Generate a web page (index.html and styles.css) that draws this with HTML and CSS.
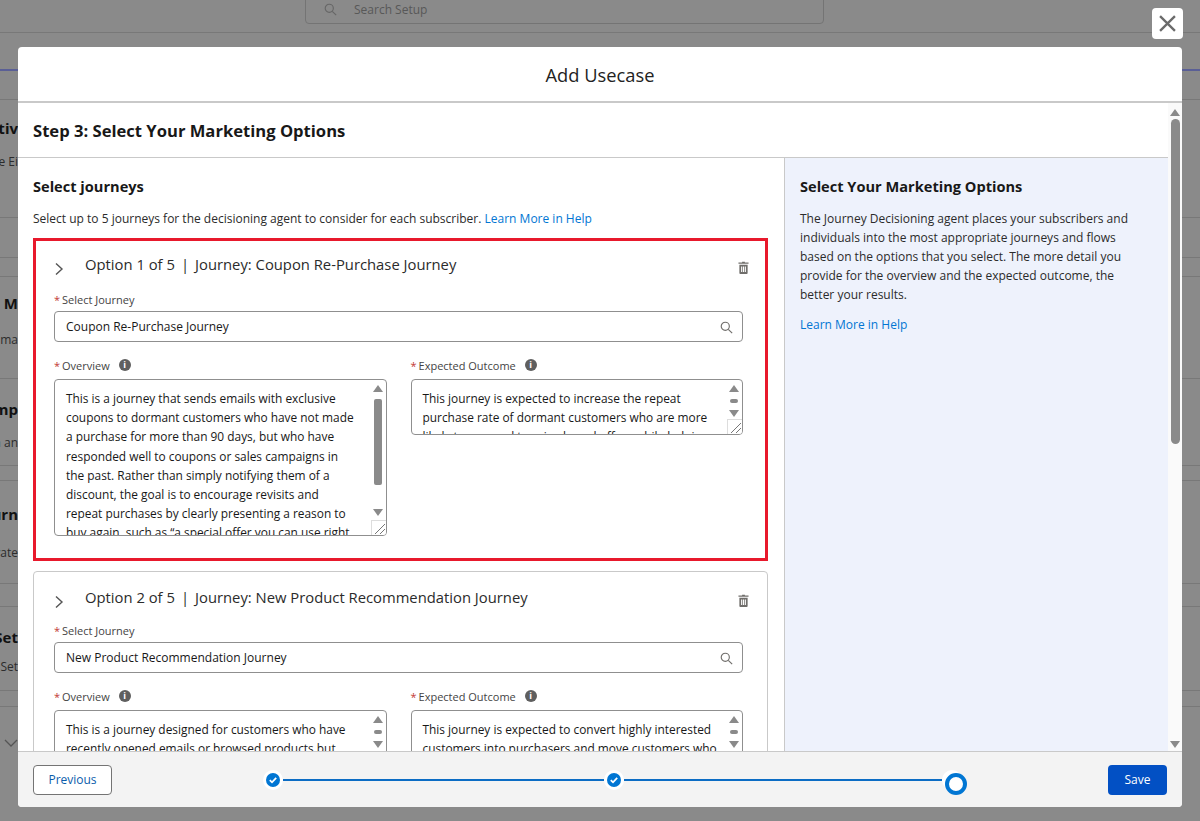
FILE: index.html
```html
<!DOCTYPE html>
<html lang="en">
<head>
    <meta charset="UTF-8">
    <title>Add Usecase</title>
    <link rel="stylesheet" href="styles.css">
</head>
<body>
    <!-- Setup page behind the dialog -->
    <div class="setup-page">
        <div class="setup-top">
            <div class="setup-search">
                <svg class="icon-search" viewBox="0 0 16 16"><circle cx="6.5" cy="6.5" r="5"/><path d="M10.2 10.2 15 15"/></svg>
                <span>Search Setup</span>
            </div>
        </div>
        <div class="setup-tabs"></div>
        <div class="setup-rows">
            <div class="setup-row row-1"><b>Objectiv</b><span>The Ei</span></div>
            <div class="setup-gap gap-1"></div>
            <div class="setup-gap gap-2"></div>
            <div class="setup-row row-2"><b>Email M</b><span>Auto ma</span></div>
            <div class="setup-row row-3"><b>Comp</b><span>Plan an</span></div>
            <div class="setup-gap gap-3"></div>
            <div class="setup-row row-4"><b>Journ</b><span>Activate</span></div>
            <div class="setup-gap gap-4"></div>
            <div class="setup-row row-5"><b>Set</b><span>Set</span></div>
            <div class="setup-gap gap-5"></div>
            <svg class="setup-chevron" viewBox="0 0 14 8"><path d="M1 1 7 7 13 1"/></svg>
        </div>
    </div>

    <button class="close-btn">
        <svg viewBox="0 0 16 16"><path d="M1 1 15 15M15 1 1 15"/></svg>
    </button>

    <div class="modal">
        <div class="modal-header">Add Usecase</div>

        <div class="modal-body">
            <div class="modal-scroll">
                <h2 class="step-title">Step 3: Select Your Marketing Options</h2>
                <div class="columns">
                    <div class="main-col">
                        <h3>Select journeys</h3>
                        <p class="intro">Select up to 5 journeys for the decisioning agent to consider for each subscriber. <a href="#">Learn More in Help</a></p>

                        <div class="card card-selected">
                            <div class="card-head">
                                <svg class="chevron" viewBox="0 0 10 14"><path d="M2 1.5 8 7 2 12.5"/></svg>
                                <span class="card-title">Option 1 of 5<span class="sep">|</span>Journey: Coupon Re-Purchase Journey</span>
                                <svg class="trash" viewBox="0 0 12 14"><path d="M4.5 1.5V.6h3v.9H11.5V3H.5V1.5Z"/><path fill-rule="evenodd" d="M1.5 4h9v9a1 1 0 0 1-1 1h-7a1 1 0 0 1-1-1ZM3.4 6v6h1.2V6ZM5.4 6v6h1.2V6ZM7.4 6v6h1.2V6Z"/></svg>
                            </div>
                            <label class="field-label"><i>*</i>Select Journey</label>
                            <div class="lookup">
                                <span>Coupon Re-Purchase Journey</span>
                                <svg class="icon-search" viewBox="0 0 16 16"><circle cx="6.5" cy="6.5" r="5"/><path d="M10.2 10.2 15 15"/></svg>
                            </div>
                            <div class="field-row">
                                <div class="field">
                                    <label class="field-label"><i>*</i>Overview <span class="info">i</span></label>
                                    <div class="textbox textbox-tall">
                                        <div class="textbox-text">This is a journey that sends emails with exclusive<br>coupons to dormant customers who have not made<br>a purchase for more than 90 days, but who have<br>responded well to coupons or sales campaigns in<br>the past. Rather than simply notifying them of a<br>discount, the goal is to encourage revisits and<br>repeat purchases by clearly presenting a reason to<br>buy again, such as “a special offer you can use right</div>
                                        <div class="mini-scroll">
                                            <span class="arrow-up"></span>
                                            <span class="thumb thumb-long"></span>
                                            <span class="arrow-down"></span>
                                        </div>
                                        <svg class="resizer" viewBox="0 0 14 14"><path d="M3 13 13 3M8 13 13 8"/></svg>
                                    </div>
                                </div>
                                <div class="field">
                                    <label class="field-label"><i>*</i>Expected Outcome <span class="info">i</span></label>
                                    <div class="textbox textbox-short">
                                        <div class="textbox-text">This journey is expected to increase the repeat<br>purchase rate of dormant customers who are more<br>likely to respond to price-based offers while helping</div>
                                        <div class="mini-scroll">
                                            <span class="arrow-up"></span>
                                            <span class="thumb"></span>
                                            <span class="arrow-down"></span>
                                        </div>
                                        <svg class="resizer" viewBox="0 0 14 14"><path d="M3 13 13 3M8 13 13 8"/></svg>
                                    </div>
                                </div>
                            </div>
                        </div>

                        <div class="card">
                            <div class="card-head">
                                <svg class="chevron" viewBox="0 0 10 14"><path d="M2 1.5 8 7 2 12.5"/></svg>
                                <span class="card-title">Option 2 of 5<span class="sep">|</span>Journey: New Product Recommendation Journey</span>
                                <svg class="trash" viewBox="0 0 12 14"><path d="M4.5 1.5V.6h3v.9H11.5V3H.5V1.5Z"/><path fill-rule="evenodd" d="M1.5 4h9v9a1 1 0 0 1-1 1h-7a1 1 0 0 1-1-1ZM3.4 6v6h1.2V6ZM5.4 6v6h1.2V6ZM7.4 6v6h1.2V6Z"/></svg>
                            </div>
                            <label class="field-label"><i>*</i>Select Journey</label>
                            <div class="lookup">
                                <span>New Product Recommendation Journey</span>
                                <svg class="icon-search" viewBox="0 0 16 16"><circle cx="6.5" cy="6.5" r="5"/><path d="M10.2 10.2 15 15"/></svg>
                            </div>
                            <div class="field-row">
                                <div class="field">
                                    <label class="field-label"><i>*</i>Overview <span class="info">i</span></label>
                                    <div class="textbox textbox-short">
                                        <div class="textbox-text">This is a journey designed for customers who have<br>recently opened emails or browsed products but</div>
                                        <div class="mini-scroll">
                                            <span class="arrow-up"></span>
                                            <span class="thumb"></span>
                                            <span class="arrow-down"></span>
                                        </div>
                                    </div>
                                </div>
                                <div class="field">
                                    <label class="field-label"><i>*</i>Expected Outcome <span class="info">i</span></label>
                                    <div class="textbox textbox-short">
                                        <div class="textbox-text">This journey is expected to convert highly interested<br>customers into purchasers and move customers who</div>
                                        <div class="mini-scroll">
                                            <span class="arrow-up"></span>
                                            <span class="thumb"></span>
                                            <span class="arrow-down"></span>
                                        </div>
                                    </div>
                                </div>
                            </div>
                        </div>
                    </div>

                    <div class="side-col">
                        <h3>Select Your Marketing Options</h3>
                        <p>The Journey Decisioning agent places your subscribers and<br>individuals into the most appropriate journeys and flows<br>based on the options that you select. The more detail you<br>provide for the overview and the expected outcome, the<br>better your results.</p>
                        <a href="#">Learn More in Help</a>
                    </div>
                </div>
            </div>
            <div class="body-scroll">
                <span class="arrow-up"></span>
                <span class="body-thumb"></span>
                <span class="arrow-down"></span>
            </div>
        </div>

        <div class="modal-footer">
            <button class="btn btn-previous">Previous</button>
            <div class="stepper">
                <span class="step step-done"><svg viewBox="0 0 12 12"><path d="M2.8 6.2 5 8.3 9.2 3.9"/></svg></span>
                <span class="step-line"></span>
                <span class="step step-done"><svg viewBox="0 0 12 12"><path d="M2.8 6.2 5 8.3 9.2 3.9"/></svg></span>
                <span class="step-line"></span>
                <span class="step step-current"></span>
            </div>
            <button class="btn btn-save">Save</button>
        </div>
    </div>
</body>
</html>
```

FILE: styles.css
```css
* {
    box-sizing: border-box;
}
html, body {
    height: 100%;
}
body {
    margin: 0;
    overflow: hidden;
    position: relative;
    background: #8a8a8a;
    color: #181818;
    font-family: "Open Sans", "Noto Sans", Arial, sans-serif;
    font-size: 12px;
}
a {
    color: #0176d3;
    text-decoration: none;
}
svg {
    display: block;
}
.icon-search {
    width: 13px;
    height: 13px;
    fill: none;
    stroke: #706e6b;
    stroke-width: 1.4;
}

/* page behind the dialog */
.setup-top {
    height: 34px;
    padding-left: 305px;
    border-bottom: 1px solid #787878;
}
.setup-search {
    width: 519px;
    height: 25px;
    display: flex;
    align-items: center;
    gap: 17px;
    padding: 0 0 5px 18px;
    margin-top: -1px;
    border: 1px solid #747474;
    border-radius: 0 0 4px 4px;
    color: #585858;
}
.setup-search .icon-search {
    stroke: #666;
}
.setup-tabs {
    height: 67px;
    border-bottom: 1px solid #787878;
    background: linear-gradient(#5a5f96, #5a5f96) 0 36px / 100% 2px no-repeat;
}
.setup-rows {
    display: flex;
    flex-direction: column;
}
.setup-row {
    display: flex;
    flex-direction: column;
    justify-content: center;
    border-bottom: 1px solid #787878;
    color: #2c2c2c;
}
.setup-row b, .setup-row span {
    width: 18px;
    display: flex;
    justify-content: flex-end;
    overflow: hidden;
    white-space: nowrap;
}
.setup-row b {
    font-size: 15px;
    color: #111;
}
.setup-gap {
    border-bottom: 1px solid #787878;
}
.row-1 {
    height: 118px;
    gap: 15px;
    padding-bottom: 30px;
}
.gap-1 {
    height: 40px;
}
.gap-2 {
    height: 19px;
}
.row-2 {
    height: 102px;
    gap: 18px;
    padding-bottom: 14px;
}
.row-3 {
    height: 87px;
    gap: 15px;
    padding-top: 6px;
}
.gap-3 {
    height: 15px;
}
.row-4 {
    height: 103px;
    gap: 20px;
}
.gap-4 {
    height: 23px;
}
.row-5 {
    height: 84px;
    gap: 11px;
    padding-top: 4px;
}
.gap-5 {
    height: 16px;
}
.setup-chevron {
    width: 14px;
    height: 8px;
    flex: none;
    margin: 32px 0 0 4px;
    fill: none;
    stroke: #555;
    stroke-width: 1.3;
}

.close-btn {
    position: absolute;
    top: 8px;
    left: 1152px;
    width: 31px;
    height: 31px;
    padding: 7px;
    border: none;
    border-radius: 4px;
    background: white;
}
.close-btn svg {
    fill: none;
    stroke: #6b6b6b;
    stroke-width: 2.2;
}

/* dialog */
.modal {
    position: absolute;
    top: 47px;
    left: 18px;
    width: 1164px;
    height: 760px;
    display: flex;
    flex-direction: column;
    overflow: hidden;
    background: white;
    border-radius: 4px;
}
.modal-header {
    height: 56px;
    flex: none;
    display: flex;
    align-items: center;
    justify-content: center;
    padding-top: 1px;
    border-bottom: 2px solid #c9c9c9;
    font-size: 18.3px;
    color: #222;
}
.modal-body {
    flex: 1;
    min-height: 0;
    display: flex;
}
.modal-scroll {
    flex: 1;
    min-width: 0;
    overflow: hidden;
}
.step-title {
    height: 55px;
    margin: 0;
    padding: 0 15px;
    display: flex;
    align-items: center;
    border-bottom: 1px solid #c9c9c9;
    font-size: 16.6px;
    font-weight: 700;
}
.columns {
    display: flex;
    height: 600px;
}
h3 {
    margin: 0;
    font-size: 14.6px;
    font-weight: 700;
    line-height: 20px;
}
.main-col {
    width: 767px;
    flex: none;
    padding: 18px 16px 0 15px;
    border-right: 1px solid #c9c9c9;
}
.intro {
    margin: 13px 0 10px;
    line-height: 19px;
    color: #2b2b2b;
}
.side-col {
    flex: 1;
    padding: 18px 15px 0;
    background: #eef2fc;
    line-height: 19px;
    color: #2b2b2b;
}
.side-col h3 {
    color: #181818;
}
.side-col p {
    margin: 13px 0 11px;
    white-space: nowrap;
}

/* journey cards */
.card {
    height: 323px;
    margin-bottom: 10px;
    padding: 15px 24px 0 20px;
    border: 1px solid #c9c9c9;
    border-radius: 4px;
}
.card-selected {
    padding: 13px 22px 0 18px;
    border: 3px solid #e8192c;
    border-radius: 0;
}
.card-head {
    height: 20px;
    display: flex;
    align-items: center;
    margin-bottom: 16px;
}
.card-selected .card-head {
    margin-bottom: 18px;
}
.chevron {
    width: 10px;
    height: 14px;
    margin-top: 10px;
    fill: none;
    stroke: #555;
    stroke-width: 1.4;
}
.card-title {
    flex: 1;
    margin-left: 21px;
    font-size: 14.8px;
    color: #2b2b2b;
}
.sep {
    margin: 0 6px;
}
.trash {
    width: 11px;
    height: 13px;
    margin: 6px -6px 0 0;
    fill: #706e6b;
}
.field-label {
    display: block;
    height: 15px;
    line-height: 15px;
    font-size: 11px;
    color: #444;
}
.field-label i {
    margin-right: 2px;
    font-style: normal;
    color: #c23934;
}
.info {
    display: inline-block;
    width: 12px;
    height: 12px;
    margin: 0 0 5px 6px;
    border-radius: 50%;
    background: #5f5f5f;
    color: white;
    font-size: 9px;
    font-weight: 700;
    line-height: 12px;
    text-align: center;
    vertical-align: middle;
}
.lookup {
    height: 31px;
    margin-top: 4px;
    display: flex;
    align-items: center;
    justify-content: space-between;
    padding: 0 9px 0 11px;
    border: 1px solid #8f8f8f;
    border-radius: 4px;
}
.lookup .icon-search {
    margin-top: 2px;
}
.field-row {
    display: flex;
    gap: 23px;
    margin-top: 16px;
}
.field {
    width: 333px;
}
.field + .field {
    margin-left: 1px;
}
.field .field-label {
    margin-bottom: 6px;
}
.textbox {
    position: relative;
    overflow: hidden;
    padding: 9px 0 0 11px;
    border: 1px solid #8f8f8f;
    border-radius: 4px;
    background: white;
    font-size: 11.9px;
    line-height: 19.2px;
    white-space: nowrap;
}
.textbox-tall {
    height: 157px;
}
.textbox-short {
    height: 56px;
}
.mini-scroll {
    position: absolute;
    top: 5px;
    right: 1px;
    bottom: 17px;
    width: 14px;
    display: flex;
    flex-direction: column;
    align-items: center;
    justify-content: space-between;
    background: white;
}
.textbox-tall .mini-scroll {
    bottom: 19px;
}
.arrow-up, .arrow-down {
    width: 0;
    height: 0;
    border-left: 5px solid transparent;
    border-right: 5px solid transparent;
}
.arrow-up {
    border-bottom: 7px solid #8a8a8a;
}
.arrow-down {
    border-top: 7px solid #8a8a8a;
}
.thumb {
    width: 8px;
    height: 4px;
    border-radius: 2px;
    background: #8a8a8a;
}
.thumb-long {
    height: 86px;
    margin-bottom: 18px;
}
.resizer {
    position: absolute;
    right: 0;
    bottom: 0;
    width: 15px;
    height: 15px;
    background: white;
    border-left: 1px solid #ddd;
    border-top: 1px solid #ddd;
    fill: none;
    stroke: #777;
}
.body-scroll {
    width: 14px;
    flex: none;
    display: flex;
    flex-direction: column;
    align-items: center;
    padding: 6px 0 3px;
    background: #fafafa;
}
.body-thumb {
    width: 9px;
    height: 325px;
    margin: 3px 0 auto;
    border-radius: 5px;
    background: #8a8a8a;
}

/* footer */
.modal-footer {
    height: 56px;
    flex: none;
    display: flex;
    align-items: center;
    padding: 0 15px;
    border-top: 1px solid #c9c9c9;
    background: #f3f3f3;
}
.btn {
    height: 30px;
    border-radius: 4px;
    font-family: inherit;
    font-size: 12px;
}
.btn-previous {
    width: 79px;
    border: 1px solid #747474;
    background: white;
    color: #0b5cab;
}
.btn-save {
    width: 59px;
    margin-left: auto;
    border: none;
    background: #0250c4;
    color: white;
}
.stepper {
    display: flex;
    align-items: center;
    margin-left: 151px;
}
.step {
    width: 20px;
    height: 20px;
    flex: none;
    padding: 3px;
    border-radius: 50%;
    background: white;
}
.step-done svg {
    width: 14px;
    height: 14px;
    padding: 1px;
    border-radius: 50%;
    background: #0176d3;
    fill: none;
    stroke: white;
    stroke-width: 1.8;
}
.step-current {
    padding: 3px;
}
.step-current::before {
    content: "";
    display: block;
    width: 14px;
    height: 14px;
    border: 4px solid #0176d3;
    border-radius: 50%;
    background: white;
}
.step-line {
    height: 2px;
    background: #0b6cc4;
}
.step-line:nth-child(2) {
    width: 321px;
}
.step-line:nth-child(4) {
    width: 318px;
}
```
